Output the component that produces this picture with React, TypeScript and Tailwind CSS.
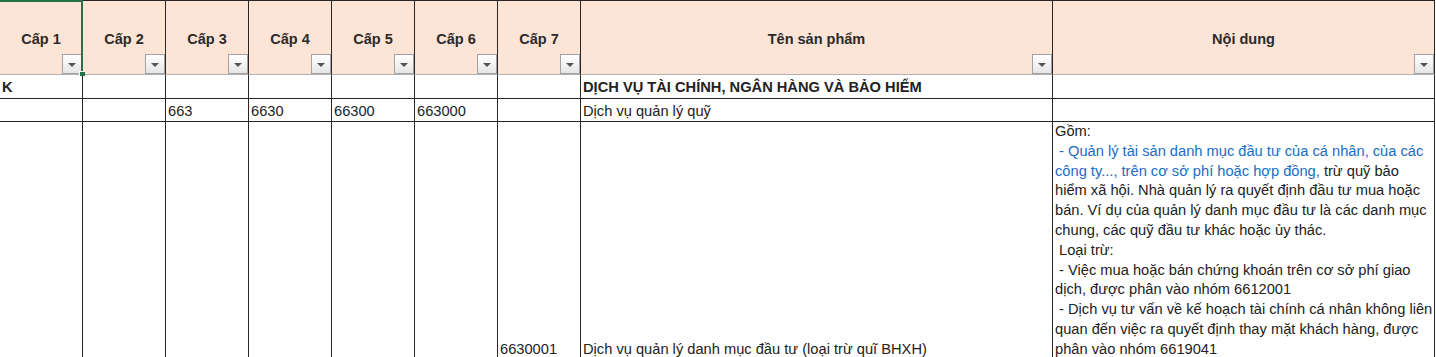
import React from "react";

const GRID = "grid grid-cols-[83px_83px_83px_83px_83px_83px_83px_472px_382px]";

function DropBtn() {
  return (
    <div className="absolute right-0 bottom-0 w-[20px] h-[20px] border border-[#a3a3a3] bg-gradient-to-b from-[#ffffff] to-[#e6e6e6] flex items-center justify-center">
      <div className="w-0 h-0 border-l-[4px] border-r-[4px] border-t-[4px] border-l-transparent border-r-transparent border-t-[#555555] mt-[2px]" />
    </div>
  );
}

function HeadCell({ label }: { label: string }) {
  return (
    <div className="relative h-[74px] bg-[#fce4d6] border-r border-b border-r-[#262626] border-b-[#b0b0b0] flex items-center justify-center pt-[4px]">
      <span className="font-bold text-[14.5px] text-[#2b2b2b]">{label}</span>
      <DropBtn />
    </div>
  );
}

function Cell({ children, bold, className }: { children?: React.ReactNode; bold?: boolean; className?: string }) {
  return (
    <div
      className={
        "border-r border-b border-[#262626] px-[2px] text-[14.67px] text-[#222222] whitespace-nowrap overflow-visible " +
        (bold ? "font-bold " : "") +
        (className ?? "")
      }
    >
      {children}
    </div>
  );
}

const BLUE = "text-[#1a6dc4]";

export default function App() {
  const heads = ["Cấp 1", "Cấp 2", "Cấp 3", "Cấp 4", "Cấp 5", "Cấp 6", "Cấp 7", "Tên sản phẩm", "Nội dung"];
  const lines: React.ReactNode[] = [
    "Gồm:",
    <span className={BLUE}> - Quản lý tài sản danh mục đầu tư của cá nhân, của các</span>,
    <>
      <span className={BLUE}>công ty..., trên cơ sở phí hoặc hợp đồng,</span> trừ quỹ bảo
    </>,
    "hiểm xã hội. Nhà quản lý ra quyết định đầu tư mua hoặc",
    "bán. Ví dụ của quản lý danh mục đầu tư là các danh mục",
    "chung, các quỹ đầu tư khác hoặc ủy thác.",
    " Loại trừ:",
    " - Việc mua hoặc bán chứng khoán trên cơ sở phí giao",
    "dịch, được phân vào nhóm 6612001",
    " - Dịch vụ tư vấn về kế hoạch tài chính cá nhân không liên",
    "quan đến việc ra quyết định thay mặt khách hàng, được",
    "phân vào nhóm 6619041",
  ];
  return (
    <div
      className="relative w-[1436px] h-[357px] overflow-hidden bg-white"
      style={{ fontFamily: '"Liberation Sans", Arial, sans-serif' }}
    >
      <div className="border-t border-[#262626] w-[1435px]">
        <div className={GRID}>
          {heads.map((h) => (
            <HeadCell key={h} label={h} />
          ))}
        </div>
        <div className={GRID + " h-[24px]"}>
          <Cell bold className="flex items-end leading-[20px] pb-[1px]">K</Cell>
          <Cell />
          <Cell />
          <Cell />
          <Cell />
          <Cell />
          <Cell />
          <Cell bold className="flex items-end leading-[20px] pb-[1px]">DỊCH VỤ TÀI CHÍNH, NGÂN HÀNG VÀ BẢO HIỂM</Cell>
          <Cell />
        </div>
        <div className={GRID + " h-[23px]"}>
          <Cell />
          <Cell />
          <Cell className="flex items-end leading-[20px] pb-[0px]">663</Cell>
          <Cell className="flex items-end leading-[20px] pb-[0px]">6630</Cell>
          <Cell className="flex items-end leading-[20px] pb-[0px]">66300</Cell>
          <Cell className="flex items-end leading-[20px] pb-[0px]">663000</Cell>
          <Cell />
          <Cell className="flex items-end leading-[20px] pb-[0px]">Dịch vụ quản lý quỹ</Cell>
          <Cell />
        </div>
        <div className={GRID + " h-[240px]"}>
          <Cell />
          <Cell />
          <Cell />
          <Cell />
          <Cell />
          <Cell />
          <Cell className="flex items-end leading-[20px] pb-[2px]">6630001</Cell>
          <Cell className="flex items-end leading-[20px] pb-[2px]">Dịch vụ quản lý danh mục đầu tư (loại trừ quĩ BHXH)</Cell>
          <Cell className="leading-[19.8px]">
            {lines.map((l, i) => (
              <div key={i} className="whitespace-pre">
                {l}
              </div>
            ))}
          </Cell>
        </div>
      </div>
      {/* selection overlay */}
      <div className="absolute left-0 top-0 w-[83px] h-[2px] bg-[#217346]" />
      <div className="absolute left-[81px] top-0 w-[2px] h-[72px] bg-[#217346]" />
      <div className="absolute left-[79px] top-[71px] w-[6px] h-[5px] bg-[#217346] border-l border-t border-white" />
    </div>
  );
}
